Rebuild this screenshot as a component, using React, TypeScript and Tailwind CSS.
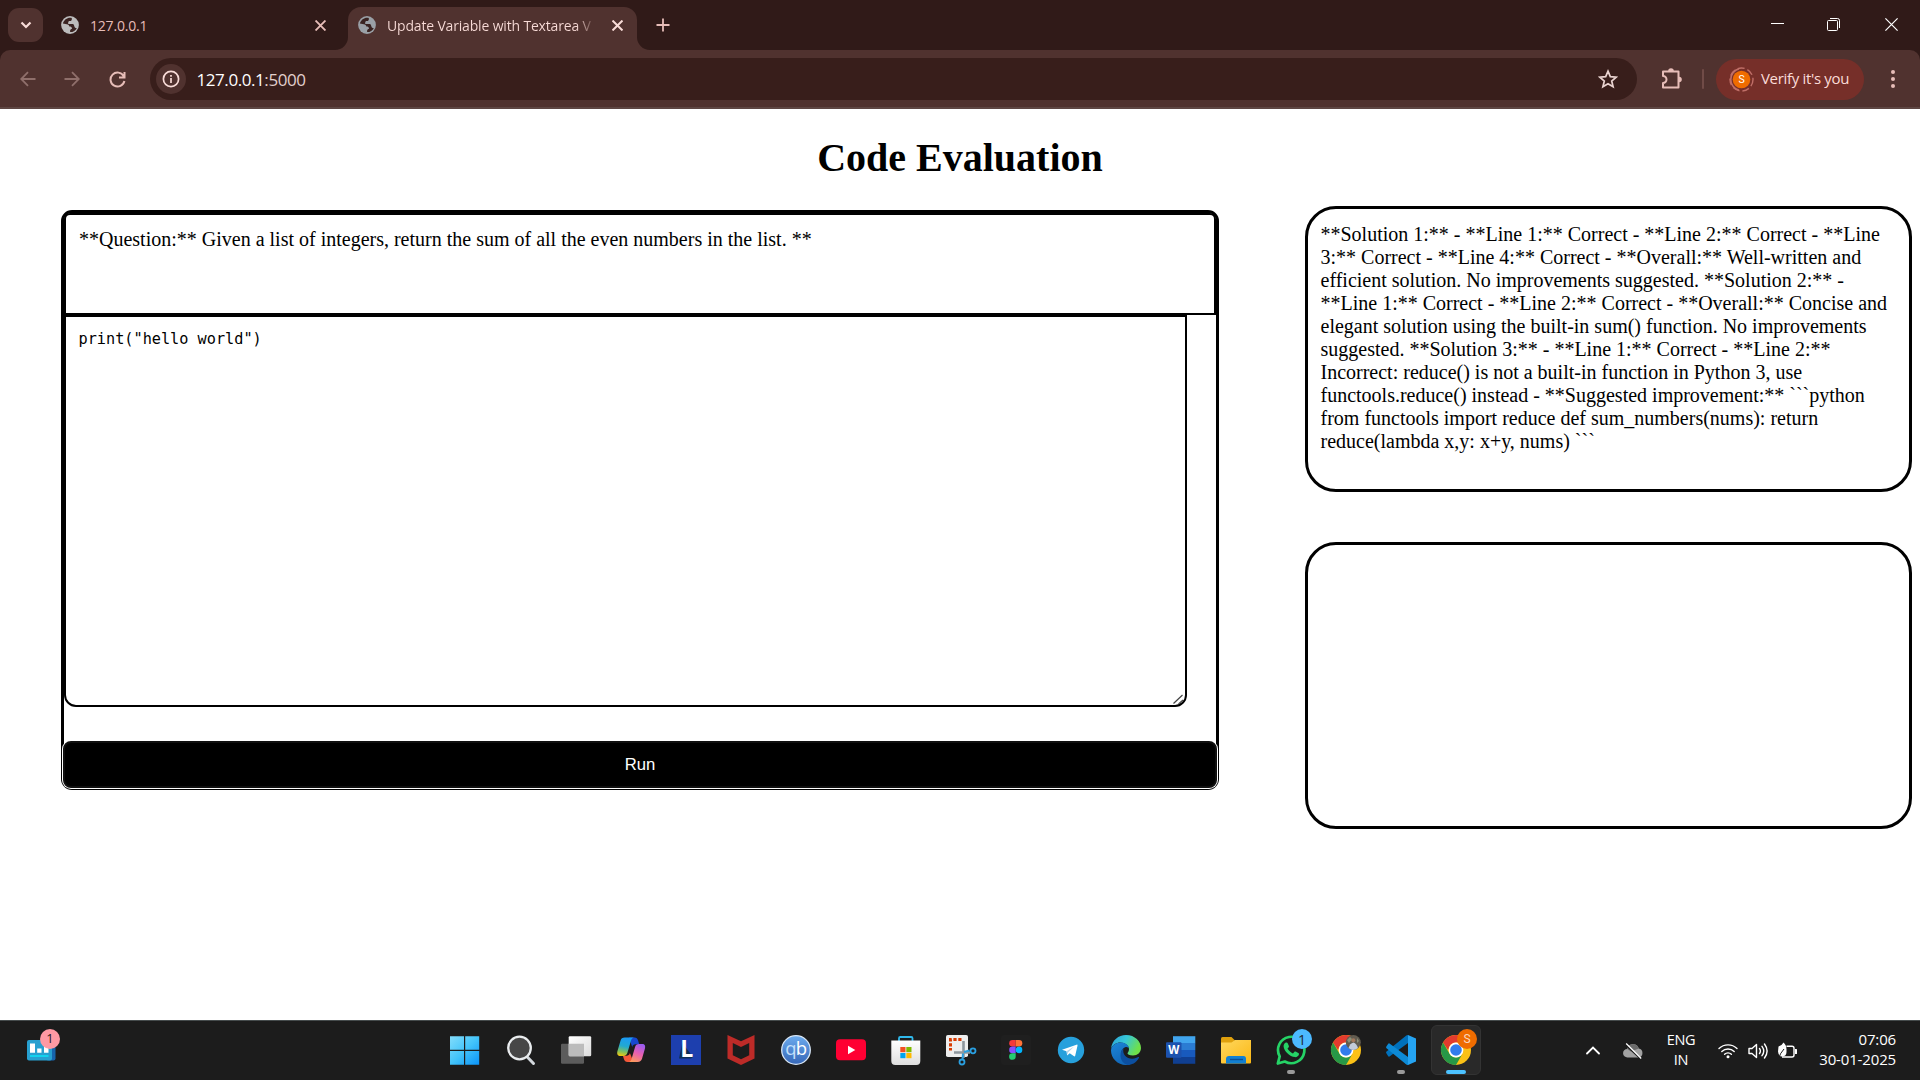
import React from "react";

function Globe({ color }: { color: string }) {
  return (
    <svg width="18" height="18" viewBox="0 0 18 18" className="shrink-0">
      <circle cx="9" cy="9" r="8.9" fill={color} />
      <path
        d="M10.800 1.900C7 .9 3 3.300 1.900 7.500L5.800 8.200C7.300 8.500 8.300 9.300 8.300 10.600c1.600 0 2.600.6 2.600 1.900v.6c-.9 0-1.800.5-1.800 1.600v1.400c3 .1 5.600-1.600 6.700-4.200-1.200.1-2-.4-2.400-1.500l-.4-1.200c-.3-.8-.9-1.100-1.700-1.100H7.200V6.400c0-.9.600-1.500 1.500-1.500h.6c.8 0 1.500-.6 1.500-1.500z"
        fill="#3a2321"
      />
    </svg>
  );
}

function Cross({ size, color, w }: { size: number; color: string; w: number }) {
  return (
    <svg width={size} height={size} viewBox="0 0 10 10" className="shrink-0">
      <path d="M.5.5l9 9M9.500.5l-9 9" stroke={color} strokeWidth={w} />
    </svg>
  );
}

function TabStrip() {
  return (
    <div className="flex h-[50px] items-start bg-[#301a18]">
      <div className="ml-2 mt-2 flex h-[34px] w-[35px] items-center justify-center rounded-[11px] bg-[#50322f]">
        <svg width="12" height="8" viewBox="0 0 12 8">
          <path d="M1.500 1.500L6 6l4.500-4.500" fill="none" stroke="#f9dcd8" strokeWidth="2.200" />
        </svg>
      </div>
      <div className="ml-[18px] mt-2 flex h-[34px] w-[265px] items-center">
        <Globe color="#bcbcbc" />
        <span className="ml-[11px] w-[213px] text-[14px] tracking-[-0.2px] text-[#e7bdb8]">127.0.0.1</span>
        <span className="ml-[11.500px] flex"><Cross size={11} color="#e7bdb8" w={1.7} /></span>
      </div>
      <div className="relative ml-[22px] mt-[7px] flex h-[43px] w-[289px] items-center rounded-t-[13px] bg-[#50322f] pb-[7px]">
        <svg className="absolute -left-[13px] bottom-0" width="13" height="13" viewBox="0 0 13 13">
          <path d="M13 0v13H0A13 13 0 0 0 13 0z" fill="#50322f" />
        </svg>
        <svg className="absolute -right-[13px] bottom-0" width="13" height="13" viewBox="0 0 13 13">
          <path d="M0 0v13h13A13 13 0 0 1 0 0z" fill="#50322f" />
        </svg>
        <span className="ml-[10px] flex"><Globe color="#9aa0a6" /></span>
        <span className="ml-[11px] w-[210px] whitespace-nowrap bg-gradient-to-r from-[#f9dcd8] from-90% to-[#50322f] bg-clip-text text-[14px] tracking-[-0.17px] text-transparent">
          Update Variable with Textarea V
        </span>
        <span className="ml-[15px] flex"><Cross size={11} color="#f9dcd8" w={1.800} /></span>
      </div>
      <svg className="ml-[19px] mt-[18px]" width="14" height="14" viewBox="0 0 14 14">
        <path d="M7 .5v13M.5 7h13" stroke="#e7bdb8" strokeWidth="1.800" />
      </svg>
      <div className="ml-auto mr-[22px] mt-[18px] flex items-center">
        <svg width="13" height="13" viewBox="0 0 13 13">
          <path d="M0 5.500h13" stroke="#fff" />
        </svg>
        <svg className="ml-[43px]" width="13" height="13" viewBox="0 0 13 13" fill="none" stroke="#fff">
          <rect x=".5" y="2.500" width="10" height="10" rx="1" />
          <path d="M3 .5h7.500a2 2 0 0 1 2 2V10" />
        </svg>
        <svg className="ml-[45px]" width="13" height="13" viewBox="0 0 13 13">
          <path d="M.4.400l12.200 12.200M12.600.400L.4 12.600" stroke="#fff" strokeWidth="1.200" />
        </svg>
      </div>
    </div>
  );
}

function Toolbar() {
  return (
    <div className="bg-[#301a18]">
      <div className="flex h-[59px] items-start rounded-t-[10px] border-b-2 border-[#5e4643] bg-[#50322f] pt-2">
        <div className="flex h-[42px] items-center pl-5">
          <svg width="16" height="16" viewBox="0 0 16 16" fill="none" stroke="#8f6f6b" strokeWidth="1.800">
            <path d="M15.500 8H1.500M8 1.200L1.200 8 8 14.800" />
          </svg>
          <svg className="ml-7" width="16" height="16" viewBox="0 0 16 16" fill="none" stroke="#8f6f6b" strokeWidth="1.800">
            <path d="M.5 8h14M8 1.200L14.800 8 8 14.800" />
          </svg>
          <svg className="ml-[29px]" width="17" height="17" viewBox="0 0 17 17" fill="none" stroke="#e7bdb8" strokeWidth="2">
            <path d="M14.700 5.200A7 7 0 1 0 15.400 10M15.500 1v5.600H10" />
          </svg>
        </div>
        <div className="ml-[24px] flex h-[42px] w-[1487px] items-center rounded-full bg-[#381e1b]">
          <div className="ml-[6px] flex h-[30px] w-[30px] items-center justify-center rounded-full bg-[#50322f]">
            <svg width="18" height="18" viewBox="0 0 18 18" fill="none" stroke="#f9dcd8" strokeWidth="1.700">
              <circle cx="9" cy="9" r="7.600" />
              <path d="M9 8v5M9 5v1.800" />
            </svg>
          </div>
          <span className="ml-[10.500px] pt-px text-[17px] tracking-[-0.430px] text-white">
            127.0.0.1<span className="text-[#e2d0cd]">:5000</span>
          </span>
          <svg className="ml-auto mr-[19px]" width="20" height="20" viewBox="0 0 20 20" fill="none" stroke="#e9d3d0" strokeWidth="1.700">
            <path d="M10 2.200l2.300 5.400 5.900.5-4.500 3.900 1.400 5.800L10 14.700l-5.100 3.100L6.300 12 1.800 8.100l5.900-.5z" />
          </svg>
        </div>
        <div className="flex h-[42px] items-center">
          <svg className="ml-[24px]" width="22" height="22" viewBox="0 0 22 22" fill="none" stroke="#e7bdb8" strokeWidth="2">
            <path d="M2 3.500h15.500V19.500H2v-4.500a3 3 0 0 0 0-7z" strokeLinejoin="round" />
            <path d="M7.200 3a2.800 2.800 0 0 1 5.600 0zM18 8.700a2.800 2.800 0 0 1 0 5.600z" fill="#e7bdb8" stroke="none" />
          </svg>
          <div className="ml-[19px] h-5 w-[2px] rounded bg-[#704b47]" />
          <div className="ml-[12px] flex h-[41px] w-[148px] items-center rounded-full bg-[#762f29]">
            <svg className="ml-[12.500px]" width="25" height="25" viewBox="0 0 25 25">
              <path d="M10 23.300A11.200 11.200 0 0 1 10 1.700" fill="none" stroke="#c06f68" strokeWidth="1.500" />
              <circle cx="12.500" cy="12.500" r="11.500" fill="none" stroke="#c06f68" strokeWidth="1.400" strokeDasharray="7 3" />
              <circle cx="12.500" cy="12.500" r="8.800" fill="#ef6c00" />
              <text x="12.500" y="16.300" textAnchor="middle" fontSize="10.500" fill="#fff" fontFamily="Roboto, sans-serif">S</text>
            </svg>
            <span className="ml-[7.500px] whitespace-nowrap pb-[2px] text-[15px] tracking-[-0.320px] text-[#fbdcd8]">Verify it's you</span>
          </div>
          <div className="ml-[26.500px] flex flex-col gap-[3px]">
            <i className="h-1 w-1 rounded-full bg-[#e7bdb8]" />
            <i className="h-1 w-1 rounded-full bg-[#e7bdb8]" />
            <i className="h-1 w-1 rounded-full bg-[#e7bdb8]" />
          </div>
        </div>
      </div>
    </div>
  );
}

const FEEDBACK = [
  "**Solution 1:** - **Line 1:** Correct - **Line 2:** Correct - **Line",
  "3:** Correct - **Line 4:** Correct - **Overall:** Well-written and",
  "efficient solution. No improvements suggested. **Solution 2:** -",
  "**Line 1:** Correct - **Line 2:** Correct - **Overall:** Concise and",
  "elegant solution using the built-in sum() function. No improvements",
  "suggested. **Solution 3:** - **Line 1:** Correct - **Line 2:**",
  "Incorrect: reduce() is not a built-in function in Python 3, use",
  "functools.reduce() instead - **Suggested improvement:** ```python",
  "from functools import reduce def sum_numbers(nums): return",
  "reduce(lambda x,y: x+y, nums) ```",
];

function Page() {
  return (
    <main className="h-[911px] bg-white font-['Liberation_Serif',serif] text-[20px] leading-[23px] text-black">
      <h1 className="pt-[26px] text-center text-[40px] font-bold leading-[46px]">Code Evaluation</h1>
      <div className="flex items-start pl-[61px]">
        <section className="mt-[29px] flex h-[580px] w-[1158px] flex-col rounded-[11px] border-[3px] border-black">
          <div className="h-[102px] shrink-0 rounded-t-[6px] border-2 border-black px-[13px] pt-[13px]">
            **Question:** Given a list of integers, return the sum of all the even numbers in the list. **
          </div>
          <div className="relative h-[392px] w-[1123px] shrink-0 rounded-b-[12px] border-2 border-black px-[12.500px] pt-[12px] font-['DejaVu_Sans_Mono',monospace] text-[15.220px] leading-[20px]">
            print("hello world")
            <svg className="absolute bottom-0 right-[1px]" width="12" height="12" viewBox="0 0 12 12" stroke="#444" fill="none">
              <path d="M1.500 10.500l9-8.500M6.500 11l4.500-4" strokeWidth="1.200" />
            </svg>
          </div>
          <button className="-mx-px -mb-px mt-[34px] h-[47px] shrink-0 rounded-[8px] border-2 border-[#101010] bg-black font-['Liberation_Sans',sans-serif] text-[16.670px] text-white shadow-[0_0_0_1px_#fff]">
            Run
          </button>
        </section>
        <section className="ml-[86px] mt-[25px] flex w-[607px] flex-col gap-[50px]">
          <div className="h-[286px] rounded-[31px] border-[3px] border-black px-[12.500px] pt-[13.500px]">
            {FEEDBACK.map((line) => (
              <p key={line} className="whitespace-nowrap">{line}</p>
            ))}
          </div>
          <div className="h-[287px] rounded-[31px] border-[3px] border-black" />
        </section>
      </div>
    </main>
  );
}

function ChromeLogo() {
  return (
    <>
      <circle cx="15" cy="15" r="15" fill="#fbc116" />
      <path d="M2 7.500A15 15 0 0 1 28 7.500H15a7.500 7.500 0 0 0-6.500 3.750L7 15z" fill="#e33b2e" />
      <path d="M2 7.500L8.500 18.750A7.500 7.500 0 0 0 21.500 18.750L15 30A15 15 0 0 1 2 7.500z" fill="#279847" />
      <circle cx="15" cy="15" r="7.400" fill="#fff" />
      <circle cx="15" cy="15" r="5.800" fill="#327ceb" />
    </>
  );
}

const ICONS: { id: string; art: React.ReactNode; open?: boolean; active?: boolean; badge?: string; badgeClass?: string }[] = [
  {
    id: "start",
    art: (
      <g>
        <defs>
          <linearGradient id="win" x1="0" y1="0" x2="1" y2="1">
            <stop offset="0" stopColor="#83ddfb" /><stop offset=".5" stopColor="#43c4fa" /><stop offset="1" stopColor="#0a93f8" />
          </linearGradient>
        </defs>
        <path d="M-1 1.200h14v13.600h-14zM14.200 1.200h14v13.600h-14zM-1 16h14v13.800h-14zM14.200 16h14v13.800h-14z" fill="url(#win)" />
      </g>
    ),
  },
  {
    id: "search",
    art: (
      <g>
        <path d="M20.800 21.500l6.700 7" stroke="#d3d8dd" strokeWidth="3" strokeLinecap="round" />
        <circle cx="13.500" cy="13" r="11.300" fill="#474747" stroke="#e9ecee" strokeWidth="2.300" />
      </g>
    ),
  },
  {
    id: "tasks",
    art: (
      <g>
        <defs>
          <linearGradient id="tv" x1="0" y1="0" x2="1" y2="1"><stop stopColor="#fff" /><stop offset="1" stopColor="#dcdcdc" /></linearGradient>
        </defs>
        <rect x="0" y="8.700" width="23" height="20" rx="1.200" fill="#5c5c5c" />
        <rect x="7.700" y="1.300" width="22.500" height="20" rx="1.200" fill="url(#tv)" />
        <path d="M7.700 8.700H23V21.300H8.900a1.200 1.200 0 0 1-1.200-1.200z" fill="#bcbcbc" />
      </g>
    ),
  },
  {
    id: "copilot",
    art: (
      <g>
        <defs>
          <linearGradient id="cpA" x1=".4" y1="0" x2=".2" y2="1"><stop stopColor="#1b9bf5" /><stop offset=".45" stopColor="#22a9d0" /><stop offset=".75" stopColor="#7dc060" /><stop offset="1" stopColor="#f5c70a" /></linearGradient>
          <linearGradient id="cpB" x1=".7" y1="0" x2=".3" y2="1"><stop stopColor="#9a5cf0" /><stop offset=".5" stopColor="#e85fb0" /><stop offset="1" stopColor="#fb9a5c" /></linearGradient>
        </defs>
        <path d="M13 2.500h5.500c2 0 3 1.200 3.600 3l1.100 3.800h-3.500c-2 0-3 1-3.500 2.700z" fill="#1748cf" />
        <path d="M17.500 27h-6c-2 0-3-1.200-3.600-3l-1-3.300h3.500c2 0 3-1 3.500-2.700z" fill="#f4583a" />
        <path d="M8.800 2.500H18.500c-2 0-3 1.300-3.600 3.400L11.500 17.500c-.6 2.200-2 3.500-4.200 3.500H4.600c-3 0-3.900-2-3.200-4.800L4.500 5.700c.6-2 1.800-3.200 4.300-3.200z" fill="url(#cpA)" />
        <path d="M21.600 27H12.300c2 0 2.800-1.300 3.400-3.400l3.300-11.400c.6-2.200 1.800-3.200 4-3.200H26c3 0 3.600 2 2.900 4.800L26 23.800c-.6 2-1.900 3.200-4.400 3.200z" fill="url(#cpB)" />
      </g>
    ),
  },
  {
    id: "l",
    art: (
      <g>
        <rect width="30" height="30" fill="#1d3fae" />
        <path d="M11.300 8L8 23.500h12l2-1.500z" fill="#0d2f55" />
        <text x="9.200" y="22.200" fontSize="23" fontWeight="bold" fill="#fff" fontFamily="Open Sans, sans-serif">L</text>
      </g>
    ),
  },
  {
    id: "mcafee",
    art: <path d="M1.500 0L15 6.300 28.500 0v23.500L15 30 1.500 23.500zM6.800 8v12.300L15 24.200l8.200-3.900V8L15 11.900z" fill="#bd2b28" fillRule="evenodd" />,
  },
  {
    id: "qb",
    art: (
      <g>
        <defs><linearGradient id="qb" x1="0" y1="0" x2="0" y2="1"><stop stopColor="#6cabee" /><stop offset="1" stopColor="#3667b8" /></linearGradient></defs>
        <circle cx="15" cy="15" r="14.300" fill="url(#qb)" stroke="#d8e6f5" strokeWidth="1.300" />
        <text x="4.300" y="20" fontSize="18.500" fill="#c4e0fb" fontFamily="Open Sans, sans-serif">q</text>
        <text x="14.800" y="20" fontSize="18.500" fill="#fff" fontFamily="Open Sans, sans-serif">b</text>
      </g>
    ),
  },
  {
    id: "youtube",
    art: (
      <g>
        <rect y="4.300" width="30" height="21" rx="4" fill="#ff0033" />
        <path d="M12 10.800v8.400l7.300-4.200z" fill="#fff" />
      </g>
    ),
  },
  {
    id: "store",
    art: (
      <g>
        <defs><linearGradient id="st" x1="0" y1="0" x2="0" y2="1"><stop stopColor="#fff" /><stop offset="1" stopColor="#dedede" /></linearGradient></defs>
        <path d="M8 6V3.200Q8 2 9.200 2h11.100q1.200 0 1.200 1.200V6" fill="none" stroke="#2fb9ec" strokeWidth="1.800" />
        <path d="M.3 5.500h29V26a4 4 0 0 1-4 4h-21a4 4 0 0 1-4-4z" fill="url(#st)" />
        <path d="M9.300 12h5.200v5.200H9.300z" fill="#f25022" />
        <path d="M15.300 12h5.200v5.200h-5.200z" fill="#7fba00" />
        <path d="M9.300 18h5.200v5.200H9.300z" fill="#00a4ef" />
        <path d="M15.300 18h5.200v5.200h-5.200z" fill="#ffb900" />
      </g>
    ),
  },
  {
    id: "snip",
    art: (
      <g>
        <rect width="22" height="22" rx="1.800" fill="#eeeeee" />
        <path d="M15.500 4.500H4.500V15.500" fill="none" stroke="#d83b01" strokeWidth="3" strokeDasharray="3.200 1.700" />
        <path d="M17.500 6v17M8 17.500h16" stroke="#8f979d" strokeWidth="2.600" fill="none" />
        <path d="M18 17l5.500-1.500M17 18.500l-.5 5.500" stroke="#2a9fe0" strokeWidth="2" />
        <circle cx="27" cy="15.800" r="2.500" fill="none" stroke="#2a9fe0" strokeWidth="1.800" />
        <circle cx="16" cy="27" r="2.500" fill="none" stroke="#2a9fe0" strokeWidth="1.800" />
      </g>
    ),
  },
  {
    id: "figma",
    art: (
      <g>
        <rect width="30" height="30" rx="3" fill="#1f1f1f" />
        <path d="M14.700 5H11.500a3.300 3.300 0 0 0 0 6.600h3.200z" fill="#f7383a" />
        <path d="M14.700 5H18a3.300 3.300 0 0 1 0 6.600h-3.300z" fill="#ff7237" />
        <path d="M14.700 11.600H11.500a3.300 3.300 0 0 0 0 6.600h3.200z" fill="#874fff" />
        <circle cx="18" cy="14.900" r="3.300" fill="#00b6ff" />
        <path d="M14.700 18.200H11.500a3.300 3.300 0 1 0 3.200 3.300z" fill="#24cb71" />
      </g>
    ),
  },
  {
    id: "telegram",
    art: (
      <g>
        <circle cx="15" cy="15" r="13.200" fill="#27a0dc" />
        <path d="M6 14.800L20.500 9.700q1.300-.4 1 1.100L19.200 20.700q-.4 1.200-1.500.4l-4-2.900-2 1.900q-.7.600-.7-.4l-.5-3.500z" fill="#fff" />
        <path d="M10.500 16.200l7.600-4.700-6 5.900-.4 2.700z" fill="#b5d5ea" />
      </g>
    ),
  },
  {
    id: "edge",
    art: (
      <g>
        <defs>
          <linearGradient id="e1" x1="0" y1="0" x2="1" y2=".4"><stop stopColor="#2a9fd8" /><stop offset=".5" stopColor="#36c7d8" /><stop offset="1" stopColor="#6ee04a" /></linearGradient>
          <linearGradient id="e2" x1="0" y1="0" x2=".5" y2="1"><stop stopColor="#1c86d8" /><stop offset="1" stopColor="#1267b8" /></linearGradient>
        </defs>
        <path d="M0 14C1 5 7.500 0 15 0c9 0 15 6.500 15 13 0 4.500-3.500 7.500-8 7.500-3.800 0-5.500-1.200-5.500-2.300 0-.8 1.500-1.400 1.500-4C18 10.500 14 7.500 9.500 7.500 5 7.500 1.500 10 0 14z" fill="url(#e1)" />
        <path d="M0 15.500C.2 10.500 5 7.500 9.500 7.500c5 0 8 2.600 8.400 5.600-1-.9-2.300-1.100-3.200-1.100-3.200 1-4.700 4-4.700 7.500 0 4.500 3 8.500 8 10.200C8 31.500 0 24 0 15.500z" fill="url(#e2)" />
        <path d="M12.500 13.200c-1.500 6 3 10.500 8.700 10.500 2.700 0 4.800-1 5.900-1.600.8-.4 1.200.3.800.9C25 28 20.500 30 17 30 12 29 9.500 24.500 9.500 20.500c0-3.500 1-6 3-7.300z" fill="#0c4fa0" />
      </g>
    ),
  },
  {
    id: "word",
    art: (
      <g>
        <path d="M7 1.200h22.300v7H7z" fill="#41a5ee" />
        <path d="M7 8h22.300v7H7z" fill="#2b7cd3" />
        <path d="M7 15h22.300v7H7z" fill="#185abd" />
        <path d="M7 22h22.300v6.800H7z" fill="#103f91" />
        <rect y="7.200" width="15.500" height="15.500" rx="1" fill="#1c52ae" />
        <text x="7.700" y="19" fontSize="11.500" textAnchor="middle" fontWeight="bold" fill="#fff" fontFamily="Open Sans, sans-serif">W</text>
      </g>
    ),
  },
  {
    id: "explorer",
    art: (
      <g>
        <defs><linearGradient id="fo" x1="0" y1="0" x2="1" y2="1"><stop stopColor="#ffd75e" /><stop offset="1" stopColor="#fbb814" /></linearGradient></defs>
        <path d="M0 3.500Q0 2 1.500 2h9L14 5.500V10H0z" fill="#dfa00d" />
        <path d="M0 7.500h10.500L14 5h16v22.500q0 1-1 1H1q-1 0-1-1z" fill="url(#fo)" />
        <path d="M5 28.500V24q0-3 3-3h14.500q2.500 0 2.500 3v4.500z" fill="#1280d2" />
        <path d="M9 24.500h13" stroke="#0b4f96" strokeWidth="1.400" />
      </g>
    ),
  },
  {
    id: "whatsapp",
    art: (
      <g>
        <path d="M1.800 28.500l1.900-7.100A13.200 13.200 0 1 1 8.800 26.500z" fill="none" stroke="#25d366" strokeWidth="2.700" strokeLinejoin="round" />
        <path d="M10 7.500c.7-.2 1.400 0 1.700.7l1.200 2.700c.2.500 0 1-.4 1.500l-1 1.200c1.200 2.200 3 3.800 5.400 4.900l1.400-1.600c.4-.4.800-.5 1.300-.3l2.700 1.300c.6.3.8.7.7 1.400-.4 2-2.400 3-4 2.800C13.500 21.700 8 16 7.600 11.500 7.500 9.500 8.500 7.900 10 7.500z" fill="#25d366" />
      </g>
    ),
    open: true,
    badge: "1",
    badgeClass: "absolute left-[26px] top-[-6px] flex h-5 w-5 items-center justify-center rounded-full bg-[#4cb9ff] text-[14px] text-[#1c2a33]",
  },
  {
    id: "chrome1",
    art: (
      <g>
        <ChromeLogo />
        <circle cx="22.300" cy="7.500" r="7.500" fill="#625c50" />
        <path d="M17.500 13c1-3 2.500-5 5-5.500 2.200 1 3.500 2.500 4.500 5.500a7.500 7.500 0 0 1-9.500 0z" fill="#c4ccdb" />
        <circle cx="22.300" cy="5.200" r="2" fill="#a3785c" />
        <path d="M16 5l3-3 2 2-3 4zM26 3l2 3-2 2z" fill="#8b9078" />
      </g>
    ),
  },
  {
    id: "vscode",
    art: (
      <g>
        <path d="M22 0l8 3.500v23L22 30l-2.500-1.500L22 22z" fill="#25a4f2" />
        <path d="M.5 18.500q-1-1 0-2L20 .7q1-.8 2-.7v8L3.500 21.500q-.7.400-1.300-.2z" fill="#0071bc" />
        <path d="M.5 11.300q-1 1 0 2L20 29.300q1 .8 2 .7v-8L3.500 8.500q-.7-.4-1.300.2z" fill="#0d8ad6" />
      </g>
    ),
    open: true,
  },
  {
    id: "chrome2",
    art: <ChromeLogo />,
    active: true,
    badge: "S",
    badgeClass: "absolute left-[25px] top-[-6px] flex h-5 w-5 items-center justify-center rounded-full bg-[#ef6c00] font-['Roboto',sans-serif] text-[12px] text-[#fbd9c0]",
  },
];

function Taskbar() {
  return (
    <footer className="flex h-[60px] items-start border-t border-[#454b4c] bg-[#1c1c1c] text-white">
      <div className="relative ml-[27px] mt-[18px] h-[22px] w-[34px]">
        <svg width="29" height="22" viewBox="0 0 29 22">
          <rect x="19" y="1" width="9.500" height="20.500" rx="2" fill="#1664ad" />
          <rect y="1" width="25" height="20.500" rx="2" fill="#27a0d0" />
          <path d="M3 4.500h5v9.300H3zM10.200 9.500h4.300v4.300h-4.300zM17 6h4.500v7.800H17z" fill="#fff" />
          <path d="M3 17h18.500" stroke="#12d3ee" strokeWidth="2" />
        </svg>
        <span className="absolute -top-[10px] left-[13px] flex h-5 w-5 items-center justify-center rounded-full bg-[#ff99a4] text-[13px] text-[#2a1a1c]">1</span>
      </div>
      <div className="ml-[377.500px] flex h-[59px]">
        {ICONS.map((i) => (
          <div key={i.id} className="flex h-[59px] w-[55px] justify-center">
            <div className={i.active ? "relative mt-1 flex h-[50px] w-[50px] flex-col items-center rounded-[6px] border border-[#333333] bg-[#292929] pt-[9px]" : "relative mt-[14px] flex h-[45px] w-[50px] flex-col items-center"}>
              <svg width="30" height="30" viewBox="0 0 30 30" className="shrink-0 overflow-visible">{i.art}</svg>
              {i.badge && <span className={i.active ? "absolute left-0 top-[9px]" : "absolute left-0 top-0"}><span className={i.badgeClass}>{i.badge}</span></span>}
              {i.open && <span className="mt-[5px] h-1 w-2 rounded-full bg-[#9a9a9a]" />}
              {i.active && <span className="mt-[5px] h-1 w-5 shrink-0 rounded-full bg-[#4cc2ff]" />}
            </div>
          </div>
        ))}
      </div>
      <div className="ml-auto mr-6 flex h-[59px] items-center">
        <svg width="14" height="9" viewBox="0 0 14 9" fill="none" stroke="#fff" strokeWidth="1.800">
          <path d="M1 7.500L7 1.500l6 6" strokeLinecap="round" />
        </svg>
        <svg className="ml-[23px]" width="20" height="18" viewBox="0 0 20 18">
          <path d="M4.500 15.500a4.300 4.300 0 0 1-.3-8.600A6 6 0 0 1 15.800 6.500a4.600 4.600 0 0 1 0 9z" fill="#a2a2a2" />
          <path d="M4.200 6.900A6 6 0 0 1 15.800 6.500L8 9.500z" fill="#6b6b6b" />
          <path d="M2.200 2.500l16 15" stroke="#1c1c1c" strokeWidth="1.500" />
          <path d="M3.200 1.500l15 15" stroke="#fff" strokeWidth="1.200" />
        </svg>
        <div className="ml-[23px] w-[30px] whitespace-nowrap pb-[2px] text-center text-[14.500px] leading-5 tracking-[-0.300px]">ENG<br />IN</div>
        <svg className="ml-[22px]" width="20" height="16" viewBox="0 0 20 16" fill="none" stroke="#fff" strokeWidth="1.400" strokeLinecap="round">
          <path d="M1 5.600a12.800 12.800 0 0 1 18 0M3.800 8.500a8.800 8.800 0 0 1 12.400 0M6.600 11.300a4.800 4.800 0 0 1 6.800 0" />
          <circle cx="10" cy="13.700" r="1.500" fill="#fff" stroke="none" />
        </svg>
        <svg className="ml-[10px]" width="20" height="18" viewBox="0 0 20 18" fill="none" stroke="#fff" strokeWidth="1.400" strokeLinecap="round" strokeLinejoin="round">
          <path d="M1 6.500h3L8.500 2.500v13L4 11.500H1zM11.500 6.500q1.800 2.500 0 5M14 4.300q3.500 4.700 0 9.400M16.500 2q5.200 7 0 14" />
        </svg>
        <svg className="ml-[9px]" width="21" height="18" viewBox="0 0 21 18">
          <path d="M9.500 4.200H15q2 0 2 2V13q0 2-2 2H5" fill="none" stroke="#fff" strokeWidth="1.400" />
          <path d="M18 7h1.500q.5 0 .5.500v4q0 .5-.5.500H18z" fill="#fff" />
          <path d="M1.500 4.500Q5 3.500 6.500.5 9.500 3 9.500 7.500V10q0 4-4 4.500Q1.500 15 1 9.500z" fill="#fff" />
          <path d="M2 16q.5-4 5-9" fill="none" stroke="#1c1c1c" />
        </svg>
        <div className="ml-[20px] w-[78px] whitespace-nowrap pb-[3px] text-right text-[15px] leading-5 tracking-[-0.150px]">07:06<br />30-01-2025</div>
      </div>
    </footer>
  );
}

export default function App() {
  return (
    <div className="h-[1080px] w-[1920px] overflow-hidden font-['Open_Sans','Noto_Sans',sans-serif]">
      <TabStrip />
      <Toolbar />
      <Page />
      <Taskbar />
    </div>
  );
}
